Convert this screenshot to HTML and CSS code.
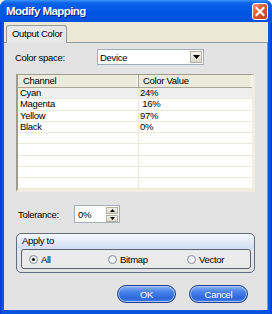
FILE: index.html
```html
<!DOCTYPE html>
<html lang="en">
<head>
  <meta charset="UTF-8" />
  <title>Modify Mapping</title>
  <link rel="stylesheet" href="styles.css">
</head>
<body>
  <div class="window">
    <div class="titlebar">
      <span class="title">Modify Mapping</span>
      <span class="close">
        <svg width="14" height="15" viewBox="0 0 14 15"><path d="M3.5 4 L10.5 11 M10.5 4 L3.5 11" stroke="#fff" stroke-width="2" stroke-linecap="square"/></svg>
      </span>
    </div>
    <div class="client">
      <div class="tabs">
        <div class="tab">Output Color</div>
      </div>
      <div class="panel">
        <div class="field">
          <label class="label-space">Color space:</label>
          <div class="select">
            <span class="select-text">Device</span>
            <span class="select-btn">
              <svg width="7" height="4" viewBox="0 0 7 4"><path d="M0 0 H7 L3.5 4 Z" fill="#000"/></svg>
            </span>
          </div>
        </div>

        <div class="list">
          <div class="list-head">
            <div class="cell c1">Channel</div>
            <div class="cell c2">Color Value</div>
          </div>
          <div class="list-row selected"><div class="cell c1">Cyan</div><div class="cell c2">24%</div></div>
          <div class="list-row"><div class="cell c1">Magenta</div><div class="cell c2">&nbsp;16%</div></div>
          <div class="list-row"><div class="cell c1">Yellow</div><div class="cell c2">97%</div></div>
          <div class="list-row"><div class="cell c1">Black</div><div class="cell c2">0%</div></div>
          <div class="list-row"><div class="cell c1"></div><div class="cell c2"></div></div>
          <div class="list-row"><div class="cell c1"></div><div class="cell c2"></div></div>
          <div class="list-row"><div class="cell c1"></div><div class="cell c2"></div></div>
          <div class="list-row"><div class="cell c1"></div><div class="cell c2"></div></div>
          <div class="list-row"><div class="cell c1"></div><div class="cell c2"></div></div>
        </div>

        <div class="field tolerance">
          <label class="label-tol">Tolerance:</label>
          <div class="spin">
            <span class="spin-text">0%</span>
            <span class="spin-btns">
              <span class="spin-btn"><svg width="5" height="3" viewBox="0 0 5 3"><path d="M0 3 H5 L2.5 0 Z" fill="#000"/></svg></span>
              <span class="spin-btn"><svg width="5" height="3" viewBox="0 0 5 3"><path d="M0 0 H5 L2.5 3 Z" fill="#000"/></svg></span>
            </span>
          </div>
        </div>

        <div class="group">
          <div class="group-head">Apply to</div>
          <div class="group-body">
            <div class="radio-item"><span class="radio checked"></span>All</div>
            <div class="radio-item"><span class="radio"></span>Bitmap</div>
            <div class="radio-item last"><span class="radio"></span>Vector</div>
          </div>
        </div>

        <div class="buttons">
          <button class="btn">OK</button>
          <button class="btn">Cancel</button>
        </div>
      </div>
    </div>
  </div>
</body>
</html>
```

FILE: styles.css
```css
* {
  box-sizing: border-box;
}
body {
  margin: 0;
  background: #fff;
  font-family: "Liberation Sans", Arial, sans-serif;
  font-size: 9.5px;
  letter-spacing: -0.3px;
  color: #000;
}
.window {
  width: 272px;
  height: 314px;
  display: flex;
  flex-direction: column;
  background: linear-gradient(to right, #0831d9, #0a52e0 2px, #0a52e0 270px, #0831d9);
  border-radius: 7px 7px 0 0;
  overflow: hidden;
}
.titlebar {
  height: 22px;
  flex: none;
  display: flex;
  justify-content: space-between;
  align-items: flex-start;
  padding: 0 4px 0 6px;
  background: linear-gradient(#3d95ff 0, #0a62ea 3px, #0058e6 50%, #0351dc 100%);
}
.title {
  color: #fff;
  font-weight: bold;
  font-size: 11.5px;
  letter-spacing: -0.55px;
  line-height: 22px;
  text-shadow: 1px 1px #0a1b85;
}
.close {
  width: 16px;
  height: 17px;
  margin-top: 3px;
  border: 1px solid #fff;
  border-radius: 3px;
  background: linear-gradient(135deg, #f09a7c, #e05a32 45%, #c13e16);
  display: flex;
  align-items: center;
  justify-content: center;
}
.client {
  flex: 1;
  margin: 0 4px 4px;
  background: #ece9d8;
  display: flex;
  flex-direction: column;
}
.tabs {
  height: 20px;
  flex: none;
  display: flex;
  align-items: flex-end;
  padding-left: 2px;
}
.tab {
  position: relative;
  z-index: 1;
  width: 61px;
  height: 18px;
  margin-bottom: -1px;
  padding-left: 5px;
  line-height: 16px;
  background: #e8e8e8;
  border: 1px solid #919b9c;
  border-bottom: none;
  border-radius: 3px 3px 0 0;
}
.panel {
  flex: 1;
  background: #e3e3e3;
  border-top: 1px solid #919b9c;
  border-right: 1px solid #919b9c;
  padding: 6px 12px 0;
  display: flex;
  flex-direction: column;
}
.field {
  display: flex;
  align-items: center;
}
.label-space {
  width: 82px;
  margin-left: -1px;
}
.select {
  width: 107px;
  height: 16px;
  background: #fff;
  border: 1px solid #a5acb5;
  display: flex;
  align-items: center;
  justify-content: space-between;
  padding: 0 1px 0 2px;
}
.select-btn {
  width: 12px;
  height: 12px;
  background: linear-gradient(#f4f3ee, #dcd8c8);
  border: 1px solid #b5b2a4;
  display: flex;
  align-items: center;
  justify-content: center;
}
.list {
  margin-top: 9px;
  height: 118px;
  background: #fff;
  border-top: 1px solid #a09c8d;
  border-left: 2px solid #a09c8d;
  border-right: 3px solid #f0eee3;
  border-bottom: 3px solid #f0eee3;
  overflow: hidden;
}
.list-head {
  display: flex;
  height: 13px;
  background: #ebeadb;
  border-bottom: 1px solid #a8a596;
}
.list-head .cell {
  padding-left: 4px;
  line-height: 12px;
  border-left: 1px solid #a8a596;
  border-right: 1px solid #fff;
}
.list-head .c1 {
  border-left-color: #ebeadb;
}
.cell.c1 {
  width: 120px;
}
.cell.c2 {
  flex: 1;
}
.list-row {
  display: flex;
  height: 11.25px;
  border-bottom: 1px solid #ede9d6;
}
.list-row .cell {
  padding-left: 2px;
  line-height: 10px;
  white-space: pre;
}
.list-row .c2 {
  border-left: 1px solid #ede9d6;
  padding-left: 1px;
}
.list-row.selected {
  background: #efefef;
}
.tolerance {
  margin-top: 13px;
  height: 18px;
}
.label-tol {
  width: 56px;
  margin-left: 2px;
}
.spin {
  width: 46px;
  height: 18px;
  background: #fff;
  border: 1px solid #a5acb5;
  display: flex;
  align-items: center;
  justify-content: space-between;
  padding: 0 1px 0 3px;
}
.spin-btns {
  display: flex;
  flex-direction: column;
  gap: 1px;
}
.spin-btn {
  width: 12px;
  height: 7px;
  background: linear-gradient(#f4f3ee, #dcd8c8);
  border: 1px solid #b5b2a4;
  display: flex;
  align-items: center;
  justify-content: center;
}
.group {
  margin-top: 10px;
  height: 40px;
  border: 1px solid #646c80;
  border-radius: 5px;
  background: linear-gradient(#f6f8fd, #d3def4 14px, #e6e7ec 16px, #e2e2e4);
  display: flex;
  flex-direction: column;
}
.group-head {
  height: 14px;
  padding-left: 5px;
  line-height: 13px;
}
.group-body {
  margin: 1px 3px 3px 4px;
  height: 20px;
  border: 1px solid #5c606c;
  border-radius: 3px;
  background: #ebebec;
  display: flex;
  align-items: center;
  padding-left: 7px;
}
.radio-item {
  flex: none;
  width: 79px;
  display: flex;
  align-items: center;
}
.radio-item.last {
  flex: 1;
  width: auto;
}
.radio {
  flex: none;
  width: 9px;
  height: 9px;
  margin-right: 3px;
  border-radius: 50%;
  border: 1px solid #8a8f9c;
  background: radial-gradient(circle at 60% 60%, #fff, #dcdde3);
  position: relative;
}
.radio.checked::after {
  content: "";
  position: absolute;
  left: 2px;
  top: 2px;
  width: 3px;
  height: 3px;
  border-radius: 50%;
  background: #111;
}
.buttons {
  margin-top: 12px;
  display: flex;
  justify-content: flex-end;
  gap: 13px;
  padding-right: 7px;
}
.btn {
  width: 59px;
  height: 18px;
  padding: 0;
  border: 1px solid #1c3f95;
  border-radius: 9px;
  background: linear-gradient(#8fb4f4, #4b83e8 35%, #2f68dd 75%, #3c78e6);
  box-shadow: inset 0 0 0 1px #a9c6f7;
  color: #fff;
  font-family: "Liberation Sans", Arial, sans-serif;
  font-size: 9.5px;
  letter-spacing: -0.3px;
}
```
